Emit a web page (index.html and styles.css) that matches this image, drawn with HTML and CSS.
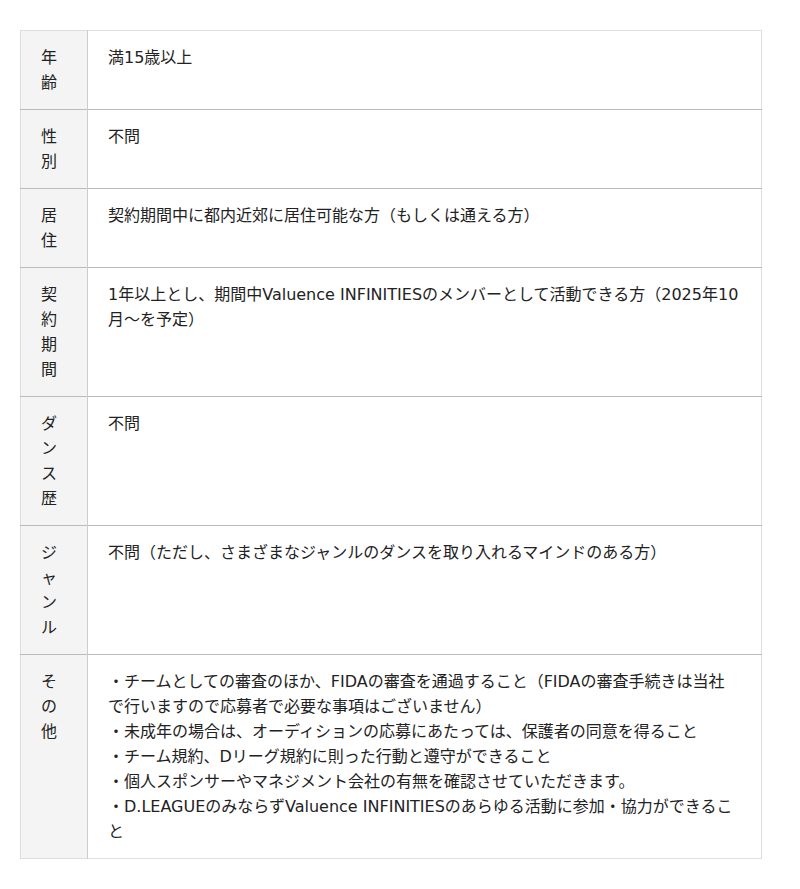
FILE: index.html
```html
<!DOCTYPE html>
<html lang="ja">
<head>
    <meta charset="UTF-8">
    <meta name="viewport" content="width=device-width, initial-scale=1.0">
    <title>応募資格</title>
    <link rel="stylesheet" href="styles.css">
</head>
<body>
    <div class="container">
        <table class="requirements">
            <tr>
                <th>年齢</th>
                <td>満15歳以上</td>
            </tr>
            <tr>
                <th>性別</th>
                <td>不問</td>
            </tr>
            <tr>
                <th>居住</th>
                <td>契約期間中に都内近郊に居住可能な方（もしくは通える方）</td>
            </tr>
            <tr>
                <th>契約期間</th>
                <td>1年以上とし、期間中Valuence INFINITIESのメンバーとして活動できる方（2025年10月～を予定）</td>
            </tr>
            <tr>
                <th>ダンス歴</th>
                <td>不問</td>
            </tr>
            <tr>
                <th>ジャンル</th>
                <td>不問（ただし、さまざまなジャンルのダンスを取り入れるマインドのある方）</td>
            </tr>
            <tr>
                <th>その他</th>
                <td>・チームとしての審査のほか、FIDAの審査を通過すること（FIDAの審査手続きは当社で行いますので応募者で必要な事項はございません）<br>・未成年の場合は、オーディションの応募にあたっては、保護者の同意を得ること<br>・チーム規約、Dリーグ規約に則った行動と遵守ができること<br>・個人スポンサーやマネジメント会社の有無を確認させていただきます。<br>・D.LEAGUEのみならずValuence INFINITIESのあらゆる活動に参加・協力ができること</td>
            </tr>
        </table>
    </div>
</body>
</html>
```

FILE: styles.css
```css
body {
    margin: 0;
    font-family: 'DejaVu Sans', 'Noto Sans CJK JP', sans-serif;
    color: #222;
    background-color: #ffffff;
}
.container {
    padding: 30px 0 0 20px;
}
.requirements {
    width: 742px;
    border-collapse: collapse;
    border: 1px solid #dddddd;
    font-size: 16px;
    line-height: 25px;
}
.requirements tr {
    border-bottom: 1px solid #bbbbbb;
}
.requirements tr:last-child {
    border-bottom: 1px solid #dddddd;
}
.requirements th {
    width: 26px;
    padding: 14px 20px;
    background-color: #f4f4f4;
    border-right: 1px solid #cccccc;
    font-weight: normal;
    text-align: left;
    vertical-align: top;
}
.requirements td {
    padding: 14px 21px 14px 20px;
    text-align: left;
    vertical-align: top;
}
```
